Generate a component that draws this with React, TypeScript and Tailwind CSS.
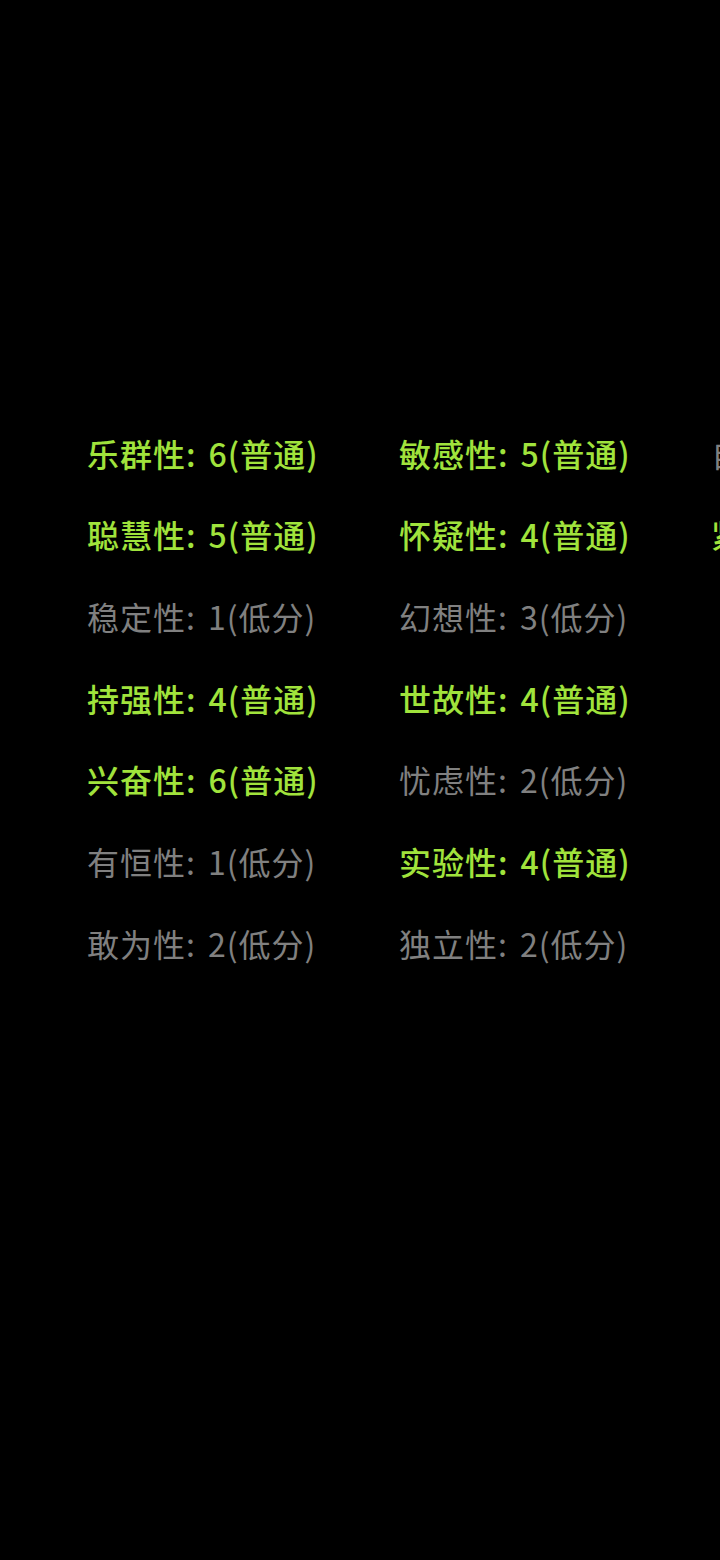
const columns: { name: string; score: number; level: string }[][] = [
  [
    { name: "乐群性", score: 6, level: "普通" },
    { name: "聪慧性", score: 5, level: "普通" },
    { name: "稳定性", score: 1, level: "低分" },
    { name: "持强性", score: 4, level: "普通" },
    { name: "兴奋性", score: 6, level: "普通" },
    { name: "有恒性", score: 1, level: "低分" },
    { name: "敢为性", score: 2, level: "低分" },
  ],
  [
    { name: "敏感性", score: 5, level: "普通" },
    { name: "怀疑性", score: 4, level: "普通" },
    { name: "幻想性", score: 3, level: "低分" },
    { name: "世故性", score: 4, level: "普通" },
    { name: "忧虑性", score: 2, level: "低分" },
    { name: "实验性", score: 4, level: "普通" },
    { name: "独立性", score: 2, level: "低分" },
  ],
  [
    { name: "自律性", score: 3, level: "低分" },
    { name: "紧张性", score: 5, level: "普通" },
  ],
];

export default function App() {
  return (
    <div
      className="w-[720px] h-[1560px] bg-black overflow-hidden"
      style={{ fontFamily: '"Noto Sans CJK SC", "Noto Sans", sans-serif' }}
    >
      <div className="flex pt-[412px] pl-[87px]">
        {columns.map((col, ci) => (
          <div key={ci} className="w-[312px] shrink-0 flex flex-col">
            {col.map((f) => {
              const high = f.level !== "低分";
              return (
                <div
                  key={f.name}
                  className={
                    high
                      ? "h-[81.67px] flex items-center whitespace-nowrap text-[32px] tracking-[1px] font-medium text-[#a0e33c]"
                      : "h-[81.67px] flex items-center whitespace-nowrap text-[32px] tracking-[1px] font-normal text-[#808080]"
                  }
                >
                  <span>{f.name}:</span>
                  <span className="pl-[12px]">
                    {f.score}({f.level})
                  </span>
                </div>
              );
            })}
          </div>
        ))}
      </div>
    </div>
  );
}
